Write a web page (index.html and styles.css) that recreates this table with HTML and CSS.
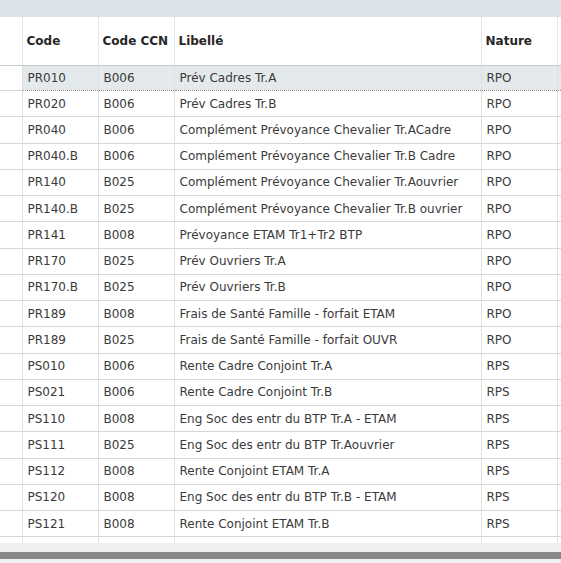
FILE: index.html
```html
<!DOCTYPE html>
<html lang="fr">
<head>
<meta charset="utf-8">
<title>Grille</title>
<link rel="stylesheet" href="styles.css">
</head>
<body>
<div class="topbar"></div>
<div class="viewport">
  <table class="grid">
    <colgroup>
      <col class="c-sel"><col class="c-code"><col class="c-ccn"><col class="c-lib"><col class="c-nat"><col class="c-end">
    </colgroup>
    <thead>
      <tr><th></th><th>Code</th><th>Code CCN</th><th>Libellé</th><th>Nature</th><th></th></tr>
    </thead>
    <tbody>
      <tr class="selected"><td></td><td>PR010</td><td>B006</td><td>Prév Cadres Tr.A</td><td>RPO</td><td></td></tr>
      <tr><td></td><td>PR020</td><td>B006</td><td>Prév Cadres Tr.B</td><td>RPO</td><td></td></tr>
      <tr><td></td><td>PR040</td><td>B006</td><td>Complément Prévoyance Chevalier Tr.ACadre</td><td>RPO</td><td></td></tr>
      <tr><td></td><td>PR040.B</td><td>B006</td><td>Complément Prévoyance Chevalier Tr.B Cadre</td><td>RPO</td><td></td></tr>
      <tr><td></td><td>PR140</td><td>B025</td><td>Complément Prévoyance Chevalier Tr.Aouvrier</td><td>RPO</td><td></td></tr>
      <tr><td></td><td>PR140.B</td><td>B025</td><td>Complément Prévoyance Chevalier Tr.B ouvrier</td><td>RPO</td><td></td></tr>
      <tr><td></td><td>PR141</td><td>B008</td><td>Prévoyance ETAM Tr1+Tr2 BTP</td><td>RPO</td><td></td></tr>
      <tr><td></td><td>PR170</td><td>B025</td><td>Prév Ouvriers Tr.A</td><td>RPO</td><td></td></tr>
      <tr><td></td><td>PR170.B</td><td>B025</td><td>Prév Ouvriers Tr.B</td><td>RPO</td><td></td></tr>
      <tr><td></td><td>PR189</td><td>B008</td><td>Frais de Santé Famille - forfait ETAM</td><td>RPO</td><td></td></tr>
      <tr><td></td><td>PR189</td><td>B025</td><td>Frais de Santé Famille - forfait OUVR</td><td>RPO</td><td></td></tr>
      <tr><td></td><td>PS010</td><td>B006</td><td>Rente Cadre Conjoint Tr.A</td><td>RPS</td><td></td></tr>
      <tr><td></td><td>PS021</td><td>B006</td><td>Rente Cadre Conjoint Tr.B</td><td>RPS</td><td></td></tr>
      <tr><td></td><td>PS110</td><td>B008</td><td>Eng Soc des entr du BTP Tr.A - ETAM</td><td>RPS</td><td></td></tr>
      <tr><td></td><td>PS111</td><td>B025</td><td>Eng Soc des entr du BTP Tr.Aouvrier</td><td>RPS</td><td></td></tr>
      <tr><td></td><td>PS112</td><td>B008</td><td>Rente Conjoint ETAM Tr.A</td><td>RPS</td><td></td></tr>
      <tr><td></td><td>PS120</td><td>B008</td><td>Eng Soc des entr du BTP Tr.B - ETAM</td><td>RPS</td><td></td></tr>
      <tr><td></td><td>PS121</td><td>B008</td><td>Rente Conjoint ETAM Tr.B</td><td>RPS</td><td></td></tr>
      <tr><td></td><td></td><td></td><td></td><td></td><td></td></tr>
    </tbody>
  </table>
</div>
<div class="hscroll"><div class="hscroll-bar"></div></div>
</body>
</html>
```
FILE: styles.css
```css
html, body {
  margin: 0;
  padding: 0;
  background: #ffffff;
}
body {
  width: 561px;
  height: 563px;
  overflow: hidden;
  font-family: "DejaVu Sans", Verdana, sans-serif;
  font-size: 12px;
  color: #3a3a3a;
}
.topbar {
  height: 17px;
  background: #dbe3e8;
}
.viewport {
  height: 526px;
  overflow: hidden;
  background: #ffffff;
}
.grid {
  border-collapse: collapse;
  table-layout: fixed;
  width: 561px;
}
.c-sel { width: 22px; }
.c-code { width: 76px; }
.c-ccn { width: 76px; }
.c-lib { width: 307px; }
.c-nat { width: 76px; }
.c-end { width: 4px; }
.grid th {
  height: 48px;
  padding: 0 0 0 4px;
  text-align: left;
  font-weight: bold;
  color: #262626;
  border-right: 1px solid #e6e6e6;
  border-bottom: 1px solid #c8c8c8;
  white-space: nowrap;
  overflow: hidden;
}
.grid td {
  height: 26.25px;
  padding: 0 0 0 5px;
  border-right: 1px solid #e0e0e0;
  border-bottom: 1px solid #d6d6d6;
  white-space: nowrap;
  overflow: hidden;
  box-sizing: border-box;
}
.grid th:last-child, .grid td:last-child {
  border-right: none;
  padding: 0;
}
.grid th:first-child, .grid td:first-child {
  padding: 0;
}
.grid tr.selected td {
  height: 25px;
  background: #e4e9ec;
  border-top: 1px dotted #8c8c8c;
  border-bottom: 1px dotted #8c8c8c;
}
.grid tr.selected td:first-child {
  background: #ffffff;
  border-top: none;
  border-bottom: 1px solid #d6d6d6;
}
.hscroll {
  height: 20px;
  background: #f0f0f0;
  padding-top: 9px;
  box-sizing: border-box;
}
.hscroll-bar {
  height: 7px;
  background: #8a8a8a;
}
```
